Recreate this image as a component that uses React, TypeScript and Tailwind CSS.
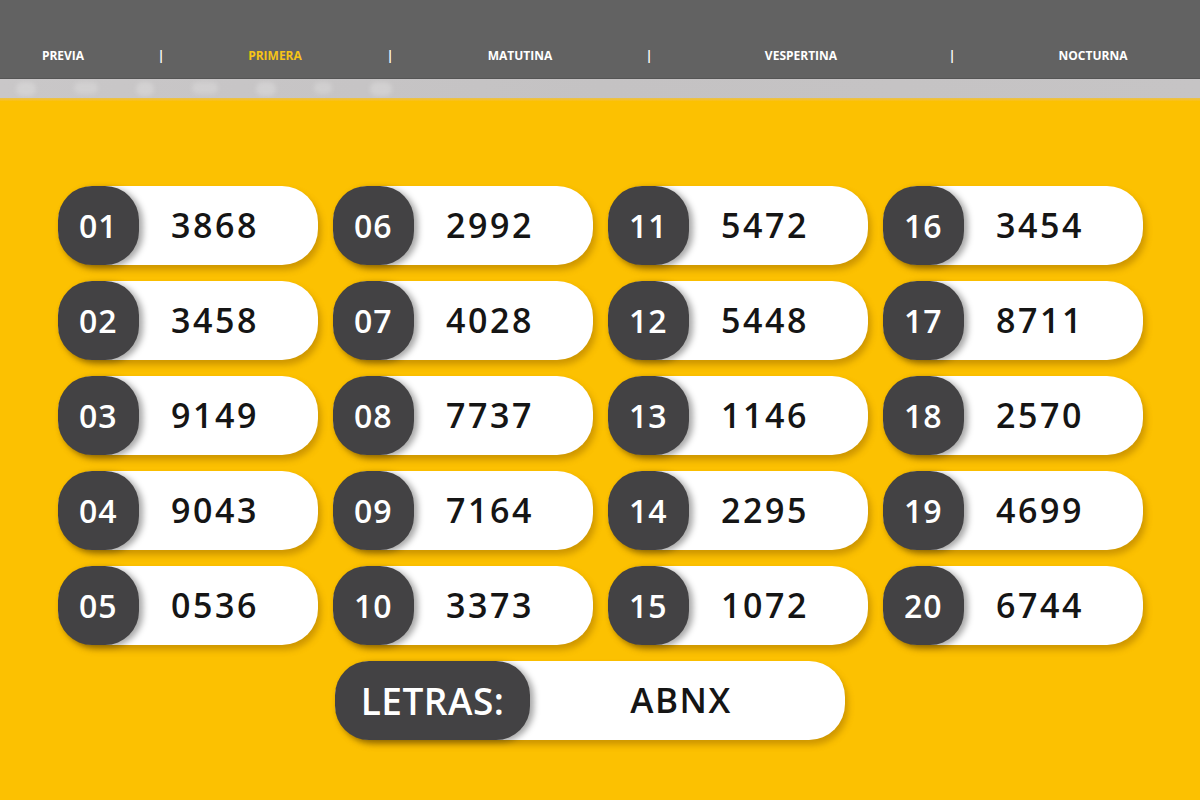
import React from "react";

const cols: [string, string][][] = [
  [["01", "3868"], ["02", "3458"], ["03", "9149"], ["04", "9043"], ["05", "0536"]],
  [["06", "2992"], ["07", "4028"], ["08", "7737"], ["09", "7164"], ["10", "3373"]],
  [["11", "5472"], ["12", "5448"], ["13", "1146"], ["14", "2295"], ["15", "1072"]],
  [["16", "3454"], ["17", "8711"], ["18", "2570"], ["19", "4699"], ["20", "6744"]],
];

const font = { fontFamily: '"Open Sans", "Liberation Sans", sans-serif' };

function Pill({ n, v }: { n: string; v: string }) {
  return (
    <div className="relative h-[79px] rounded-[36px] bg-white shadow-[3px_5px_6px_rgba(150,100,0,0.45)]">
      <div className="flex h-full items-center justify-center pl-[54px] text-[34px] font-semibold tracking-[2.5px] text-[#151515]">
        {v}
      </div>
      <div className="absolute left-0 top-0 flex h-[79px] min-w-[76px] items-center justify-center rounded-[34px] bg-[#434244] px-[21px] text-[32px] font-semibold tracking-[1px] text-white shadow-[4px_2px_6px_rgba(0,0,0,0.35)]">
        {n}
      </div>
    </div>
  );
}

export default function App() {
  return (
    <div className="flex h-[800px] w-[1200px] flex-col bg-[#fcc101]" style={font}>
      <div className="flex h-[78px] items-end bg-[#626262] pb-[13px]">
        <div className="grid w-full grid-cols-[126px_70px_158px_72px_188px_70px_234px_68px_214px] items-center text-center text-[12px] font-bold text-white">
          <span>PREVIA</span>
          <span>|</span>
          <span className="text-[#f6c417]">PRIMERA</span>
          <span>|</span>
          <span>MATUTINA</span>
          <span>|</span>
          <span>VESPERTINA</span>
          <span>|</span>
          <span>NOCTURNA</span>
        </div>
      </div>
      <div className="relative h-[20px] overflow-hidden border-t border-[#555] bg-gradient-to-r from-[#c9c7c8] via-[#c4c2c3] to-[#c6c4c5]">
        <div className="flex gap-[38px] pl-[16px] pt-[3px] opacity-40 blur-[2px]">
          <span className="h-[14px] w-[20px] rounded-full bg-[#e4e3e3]" />
          <span className="h-[12px] w-[24px] rounded-full bg-[#e0dfdf]" />
          <span className="h-[14px] w-[18px] rounded-full bg-[#e4e3e3]" />
          <span className="h-[12px] w-[26px] rounded-full bg-[#e0dfdf]" />
          <span className="h-[14px] w-[20px] rounded-full bg-[#e4e3e3]" />
          <span className="h-[12px] w-[18px] rounded-full bg-[#e0dfdf]" />
          <span className="h-[14px] w-[22px] rounded-full bg-[#e4e3e3]" />
        </div>
      </div>
      <div className="h-[3px] bg-gradient-to-b from-[#e8c04a] to-[#fcc101]" />
      <div className="flex flex-col items-start pl-[58px] pt-[85px]">
        <div className="grid w-[1085px] grid-cols-4 gap-x-[15px]">
          {cols.map((c, i) => (
            <div key={i} className="flex flex-col gap-[16px]">
              {c.map(([n, v]) => (
                <Pill key={n} n={n} v={v} />
              ))}
            </div>
          ))}
        </div>
        <div className="relative ml-[277px] mt-[16px] h-[79px] w-[510px] rounded-[36px] bg-white shadow-[3px_5px_6px_rgba(150,100,0,0.45)]">
          <div className="flex h-full items-center justify-center pl-[182px] text-[35px] font-semibold tracking-[1.5px] text-[#151515]">
            ABNX
          </div>
          <div className="absolute left-0 top-0 flex h-[79px] w-[195px] items-center justify-center rounded-[34px] bg-[#434244] text-[37px] font-semibold tracking-[0.5px] text-white shadow-[4px_2px_6px_rgba(0,0,0,0.35)]">
            LETRAS:
          </div>
        </div>
      </div>
    </div>
  );
}
